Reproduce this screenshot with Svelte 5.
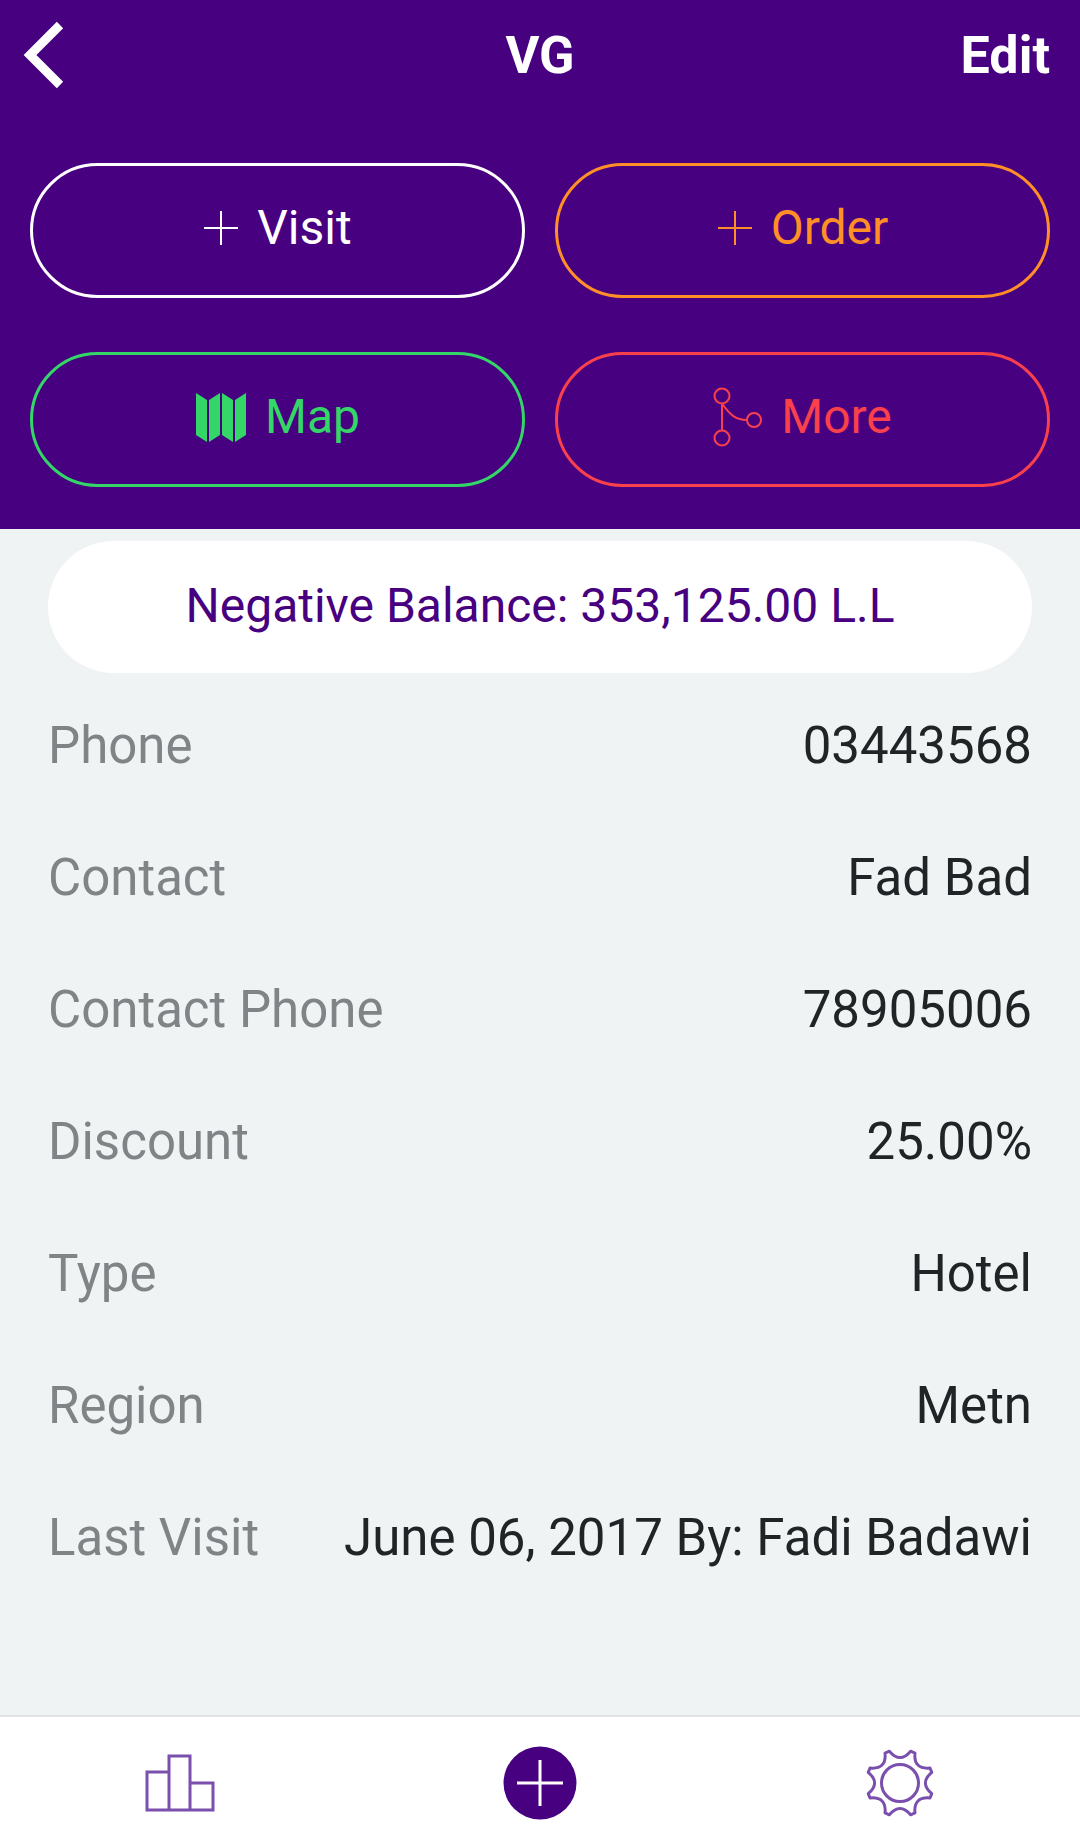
<script lang="ts">
	const details = [
		{ label: 'Phone', value: '03443568' },
		{ label: 'Contact', value: 'Fad Bad' },
		{ label: 'Contact Phone', value: '78905006' },
		{ label: 'Discount', value: '25.00%' },
		{ label: 'Type', value: 'Hotel' },
		{ label: 'Region', value: 'Metn' },
		{ label: 'Last Visit', value: 'June 06, 2017 By: Fadi Badawi' }
	];

	// Scalloped gear outline: 8 flat tips joined by concave curves
	function gearPath(): string {
		const point = (deg: number, r: number) => {
			const a = (deg * Math.PI) / 180;
			return `${(36 + r * Math.sin(a)).toFixed(2)} ${(36 - r * Math.cos(a)).toFixed(2)}`;
		};
		let d = '';
		for (let i = 0; i < 8; i++) {
			const mid = 22.5 + i * 45;
			d += `${i === 0 ? 'M' : 'L'}${point(mid - 4, 33.5)} L${point(mid + 4, 33.5)} `;
			d += `Q${point(mid + 22.5, 19)} ${point(mid + 41, 33.5)} `;
		}
		return d + 'Z';
	}
</script>

<div class="page">
	<header class="header">
		<div class="topbar">
			<svg class="back" width="44" height="68" viewBox="0 0 44 68" aria-hidden="true">
				<path d="M38 4 L8 34 L38 64" fill="none" stroke="#fff" stroke-width="9" />
			</svg>
			<h1>VG</h1>
			<span class="edit">Edit</span>
		</div>

		<div class="actions">
			<button class="pill visit">
				<svg width="36" height="36" viewBox="0 0 36 36" aria-hidden="true">
					<path d="M18 1V35M1 18H35" stroke="currentColor" stroke-width="2" />
				</svg>
				Visit
			</button>
			<button class="pill order">
				<svg width="36" height="36" viewBox="0 0 36 36" aria-hidden="true">
					<path d="M18 1V35M1 18H35" stroke="currentColor" stroke-width="2" />
				</svg>
				Order
			</button>
			<button class="pill map">
				<svg width="52" height="52" viewBox="0 0 52 52" aria-hidden="true">
					<path
						fill="currentColor"
						d="M1 2L12 9V51L1 44ZM14 9L25 2V44L14 51ZM27 2L38 9V51L27 44ZM40 9L51 2V44L40 51Z"
					/>
				</svg>
				Map
			</button>
			<button class="pill more">
				<svg width="50" height="60" viewBox="0 0 50 60" aria-hidden="true">
					<g fill="none" stroke="currentColor" stroke-width="2">
						<circle cx="9" cy="9" r="7.5" />
						<circle cx="9" cy="51" r="7.5" />
						<circle cx="41" cy="33" r="7" />
						<path d="M9 16.5V43.5M9 16.5C17 28 23 33 34 33" />
					</g>
				</svg>
				More
			</button>
		</div>
	</header>

	<main class="content">
		<div class="balance">Negative Balance: 353,125.00 L.L</div>
		<dl class="details">
			{#each details as row}
				<div class="row">
					<dt>{row.label}</dt>
					<dd>{row.value}</dd>
				</div>
			{/each}
		</dl>
	</main>

	<nav class="tabbar">
		<div class="tab">
			<svg width="70" height="58" viewBox="0 0 70 58" aria-hidden="true">
				<path
					d="M2 18H24V56H2ZM24 2H45V56H24ZM45 29H68V56H45Z"
					fill="none"
					stroke="#7a4fad"
					stroke-width="3"
				/>
			</svg>
		</div>
		<div class="tab">
			<svg width="74" height="74" viewBox="0 0 74 74" aria-hidden="true">
				<circle cx="37" cy="37" r="36.5" fill="#470080" />
				<path d="M37 14V60M14 37H60" stroke="#fff" stroke-width="3" />
			</svg>
		</div>
		<div class="tab">
			<svg width="72" height="72" viewBox="0 0 72 72" aria-hidden="true">
				<g fill="none" stroke="#7a4fad" stroke-width="3" stroke-linejoin="round">
					<path d={gearPath()} />
					<circle cx="36" cy="36" r="18.5" />
				</g>
			</svg>
		</div>
	</nav>
</div>

<style>
	:global(body) {
		margin: 0;
		font-family: Roboto, 'Liberation Sans', sans-serif;
	}

	.page {
		width: 1080px;
		height: 1840px;
		display: flex;
		flex-direction: column;
		background: #f0f3f4;
	}

	/* Header */
	.header {
		height: 529px;
		box-sizing: border-box;
		padding: 0 30px;
		background: #470080;
		color: #fff;
	}

	.topbar {
		height: 163px;
		display: grid;
		grid-template-columns: 1fr auto 1fr;
		padding-bottom: 53px;
		box-sizing: border-box;
		align-items: center;
	}

	.back {
		margin-left: -8px;
	}

	h1 {
		margin: 0;
		font-size: 52px;
		font-weight: 700;
	}

	.edit {
		justify-self: end;
		font-size: 52px;
		font-weight: 700;
	}

	.actions {
		display: grid;
		grid-template-columns: 495px 495px;
		grid-auto-rows: 135px;
		column-gap: 30px;
		row-gap: 54px;
	}

	.pill {
		display: flex;
		align-items: center;
		justify-content: center;
		gap: 18px;
		padding: 0 0 6px;
		background: none;
		border: 3px solid currentColor;
		border-radius: 68px;
		font-family: inherit;
		font-size: 48px;
	}

	.visit {
		color: #fff;
	}

	.order {
		color: #ff8f26;
	}

	.map {
		color: #33d667;
	}

	.more {
		color: #f9404b;
	}

	/* Details */
	.content {
		flex: 1;
		padding: 12px 48px 0;
	}

	.balance {
		height: 132px;
		box-sizing: border-box;
		padding-bottom: 3px;
		display: flex;
		align-items: center;
		justify-content: center;
		background: #fff;
		border-radius: 66px;
		color: #470080;
		font-size: 48px;
	}

	.details {
		margin: 6px 0 0;
	}

	.row {
		height: 132px;
		display: flex;
		align-items: center;
		justify-content: space-between;
		font-size: 51px;
	}

	dt {
		color: #808486;
	}

	dd {
		margin: 0;
		color: #212427;
	}

	/* Tab bar */
	.tabbar {
		height: 125px;
		box-sizing: border-box;
		padding-top: 12px;
		display: grid;
		grid-template-columns: repeat(3, 1fr);
		align-items: center;
		justify-items: center;
		background: #fff;
		border-top: 2px solid #e2e3e4;
	}
</style>
